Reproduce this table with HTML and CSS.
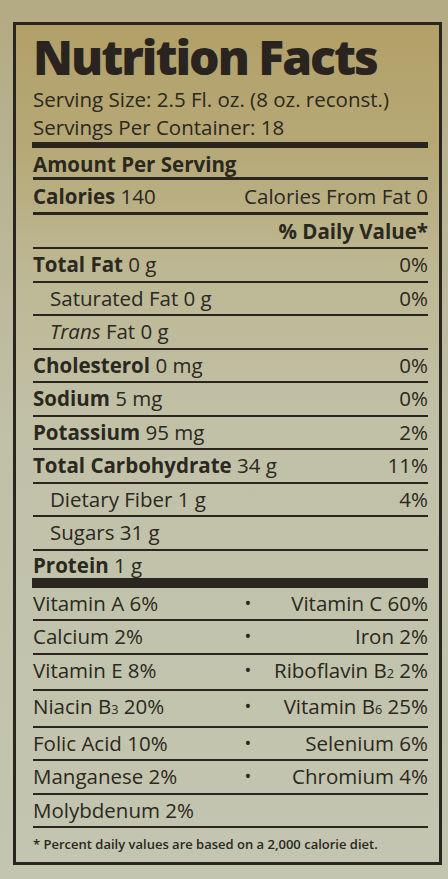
FILE: index.html
```html
<!DOCTYPE html>
<html lang="en">

<head>
    <meta charset="UTF-8">
    <meta name="viewport" content="width=device-width, initial-scale=1.0">
    <title>Nutrition Facts</title>
    <link rel="stylesheet" href="styles.css">
</head>

<body>
    <div class="label">
        <h1 class="title">Nutrition Facts</h1>
        <div class="serving">
            <div>Serving Size: 2.5 Fl. oz. (8 oz. reconst.)</div>
            <div>Servings Per Container: 18</div>
        </div>

        <div class="bar"></div>

        <div class="row amount"><b>Amount Per Serving</b></div>
        <div class="row calories">
            <span><b>Calories</b> 140</span>
            <span>Calories From Fat 0</span>
        </div>
        <div class="row daily"><b>% Daily Value*</b></div>

        <div class="row"><span><b>Total Fat</b> 0 g</span><span>0%</span></div>
        <div class="row sub"><span>Saturated Fat 0 g</span><span>0%</span></div>
        <div class="row sub"><span><i>Trans</i> Fat 0 g</span></div>
        <div class="row"><span><b>Cholesterol</b> 0 mg</span><span>0%</span></div>
        <div class="row"><span><b>Sodium</b> 5 mg</span><span>0%</span></div>
        <div class="row"><span><b>Potassium</b> 95 mg</span><span>2%</span></div>
        <div class="row"><span><b>Total Carbohydrate</b> 34 g</span><span>11%</span></div>
        <div class="row sub"><span>Dietary Fiber 1 g</span><span>4%</span></div>
        <div class="row sub"><span>Sugars 31 g</span></div>
        <div class="row protein"><span><b>Protein</b> 1 g</span></div>

        <div class="bar thick"></div>

        <div class="vit"><span>Vitamin A 6%</span><span class="dot">&bull;</span><span class="right">Vitamin C 60%</span></div>
        <div class="vit"><span>Calcium 2%</span><span class="dot">&bull;</span><span class="right">Iron 2%</span></div>
        <div class="vit"><span>Vitamin E 8%</span><span class="dot">&bull;</span><span class="right">Riboflavin B<small>2</small> 2%</span></div>
        <div class="vit"><span>Niacin B<small>3</small> 20%</span><span class="dot">&bull;</span><span class="right">Vitamin B<small>6</small> 25%</span></div>
        <div class="vit"><span>Folic Acid 10%</span><span class="dot">&bull;</span><span class="right">Selenium 6%</span></div>
        <div class="vit"><span>Manganese 2%</span><span class="dot">&bull;</span><span class="right">Chromium 4%</span></div>
        <div class="vit"><span>Molybdenum 2%</span></div>

        <p class="note">* Percent daily values are based on a 2,000 calorie diet.</p>
    </div>
</body>
</html>
```

FILE: styles.css
```css
body {
    margin: 0;
    height: 879px;
    overflow: hidden;
    font-family: "Open Sans", "Noto Sans", sans-serif;
    color: #2b2820;
    background: linear-gradient(180deg, #b4aa83 0%, #b9b493 22%, #c0c0a7 48%, #c4c5b0 100%);
}

.label {
    margin: 22px 0 0 13px;
    width: 429px;
    box-sizing: border-box;
    border: 3px solid #2b2520;
    padding: 0 11px 0 17px;
    background: linear-gradient(180deg, #b2a068 0%, #b6a876 14%, #bdb894 30%, #c1c1a8 48%, #c3c5b0 100%);
}

.title {
    margin: 0;
    padding-top: 9px;
    font-size: 48px;
    line-height: 46px;
    font-weight: 800;
    letter-spacing: -2px;
    color: #2a2420;
}

.serving {
    margin-top: 5px;
    font-size: 20.5px;
    line-height: 28px;
}

.bar {
    height: 6px;
    margin: 1px 0 0 -1px;
    background: #2b2520;
}

.bar.thick {
    height: 10px;
    margin-top: 0;
}

.row {
    display: flex;
    justify-content: space-between;
    font-size: 20.5px;
    line-height: 31.5px;
    border-bottom: 2px solid #2b2520;
    white-space: nowrap;
}

.row b {
    font-weight: 700;
}

.row.sub {
    padding-left: 17px;
}

.row.amount {
    padding-top: 3px;
    line-height: 26px;
    border-bottom-width: 3px;
}

.row.calories {
    line-height: 32px;
    border-bottom-width: 3px;
}

.row.daily {
    justify-content: flex-end;
    line-height: 32px;
}

.row.protein {
    padding-top: 1px;
    line-height: 26px;
    border-bottom: none;
}

.vit {
    display: grid;
    grid-template-columns: 1fr 24px 168px;
    font-size: 20.5px;
    line-height: 31.5px;
    border-bottom: 2px solid #2b2520;
    white-space: nowrap;
}

.vit .dot {
    text-align: center;
    font-size: 18px;
}

.vit .right {
    text-align: right;
}

.vit small {
    font-size: 62%;
}

.note {
    margin: 0;
    padding: 7px 0 9px;
    font-size: 13px;
    line-height: 18px;
    font-weight: 600;
}
```
